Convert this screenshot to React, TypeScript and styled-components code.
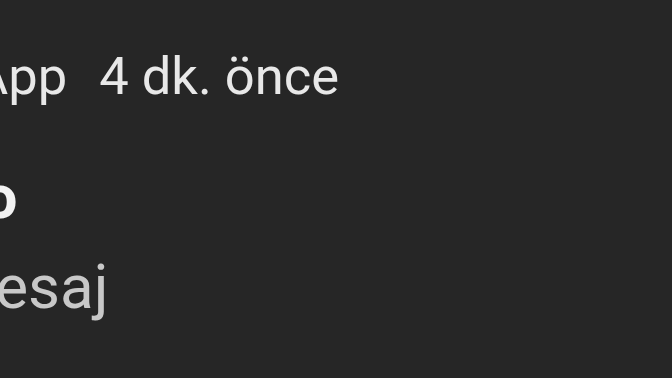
import * as React from "react";
import styled, { createGlobalStyle } from "styled-components";

const GlobalStyle = createGlobalStyle`
  html, body {
    margin: 0;
    padding: 0;
    background: #262626;
    overflow: hidden;
  }
  body {
    font-family: Roboto, "Noto Sans", sans-serif;
  }
`;

function App(): JSX.Element {
  return (
    <>
      <GlobalStyle />
      <Notification>
        <Header>
          <AppIcon />
          <AppName>App</AppName>
          <Time>4 dk. önce</Time>
        </Header>
        <Body>
          <Title>Ko</Title>
          <Message>Mesaj</Message>
        </Body>
      </Notification>
    </>
  );
}

const Notification = styled.div`
  display: flex;
  flex-direction: column;
  width: 672px;
  height: 378px;
  padding-top: 44px;
  box-sizing: border-box;
  background: #262626;
  overflow: hidden;
`;

const Header = styled.div`
  display: flex;
  align-items: center;
  margin-left: -91px;
  height: 64px;
  font-size: 52.5px;
  line-height: 64px;
  color: #e8e8e8;
`;

const AppIcon = styled.div`
  width: 48px;
  height: 48px;
  margin-right: 17px;
  border-radius: 50%;
  background: #3d3d3d;
`;

const AppName = styled.span`
  margin-right: 32px;
`;

const Time = styled.span``;

const Body = styled.div`
  display: flex;
  flex-direction: column;
  margin-top: 45px;
  margin-left: -59px;
`;

const Title = styled.div`
  margin-left: 3px;
  font-size: 62px;
  font-weight: 700;
  line-height: 88px;
  color: #f2f2f2;
`;

const Message = styled.div`
  font-size: 62px;
  line-height: 91px;
  color: #c8c8c8;
`;

export default App;
